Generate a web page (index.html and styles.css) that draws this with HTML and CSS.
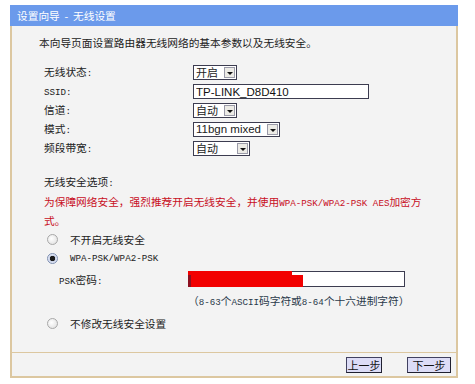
FILE: index.html
```html
<!DOCTYPE html>
<html lang="zh-CN">

<head>
    <meta charset="UTF-8">
    <meta name="viewport" content="width=device-width, initial-scale=1.0">
    <title>设置向导 - 无线设置</title>
    <link rel="stylesheet" href="styles.css">
</head>

<body>
    <div class="wizard">
        <div class="wizard-title">设置向导 &nbsp;-&nbsp; 无线设置</div>

        <div class="wizard-body">
            <p class="intro">本向导页面设置路由器无线网络的基本参数以及无线安全。</p>

            <div class="form">
                <label>无线状态<span class="en">:</span></label>
                <div class="sel sel-short"><span class="sel-text">开启</span><span class="sel-arrow"></span></div>

                <label><span class="en">SSID:</span></label>
                <input class="text" type="text" value="TP-LINK_D8D410">

                <label>信道<span class="en">:</span></label>
                <div class="sel sel-short"><span class="sel-text">自动</span><span class="sel-arrow"></span></div>

                <label>模式<span class="en">:</span></label>
                <div class="sel sel-mode"><span class="sel-text latin">11bgn mixed</span><span class="sel-arrow"></span></div>

                <label>频段带宽<span class="en">:</span></label>
                <div class="sel sel-band"><span class="sel-text">自动</span><span class="sel-arrow"></span></div>
            </div>

            <div class="security">
                <div class="sec-title">无线安全选项<span class="en">:</span></div>
                <p class="warn">为保障网络安全，强烈推荐开启无线安全，并使用<span class="en">WPA-PSK/WPA2-PSK AES</span>加密方<br>式。</p>

                <label class="opt"><span class="radio"></span>不开启无线安全</label>
                <label class="opt"><span class="radio checked"></span><span class="en">WPA-PSK/WPA2-PSK</span></label>

                <div class="psk">
                    <span class="psk-label"><span class="en">PSK</span>密码<span class="en">:</span></span>
                    <div class="psk-field">
                        <input class="text psk-input" type="password" value="">
                        <span class="redact redact-top"></span>
                        <span class="redact redact-bottom"></span>
                    </div>
                </div>
                <div class="hint">（<span class="en">8-63</span>个<span class="en">ASCII</span>码字符或<span class="en">8-64</span>个十六进制字符）</div>

                <label class="opt opt-last"><span class="radio"></span>不修改无线安全设置</label>
            </div>
        </div>

        <div class="wizard-foot">
            <button class="btn btn-prev">上一步</button>
            <button class="btn btn-next">下一步</button>
        </div>
    </div>
</body>

</html>
```

FILE: styles.css
```css
body {
    margin: 5px 0 0 10px;
    background-color: #fff;
    font-family: "Noto Sans CJK SC", sans-serif;
    font-size: 10.7px;
    color: #222;
}

.en {
    font-family: "Liberation Mono", "Noto Sans CJK SC", monospace;
    font-size: 9.2px;
}

.wizard {
    width: 444px;
    border: 2px solid #dcc7a0;
    border-top: 0;
    background-color: #f3f3f3;
}

.wizard-title {
    height: 21px;
    line-height: 21px;
    margin: 0 -2px;
    padding-left: 7px;
    background-color: #6b9aeb;
    color: #fff;
}

.wizard-body {
    height: 326px;
    padding: 0 0 0 27px;
}

.intro {
    margin: 0;
    padding-top: 8px;
    line-height: 17px;
}

.form {
    display: grid;
    grid-template-columns: 149px auto;
    grid-auto-rows: 19px;
    align-items: center;
    justify-items: start;
    margin: 12px 0 0 5px;
}

.form label {
    line-height: 17px;
}

.sel {
    display: flex;
    height: 15px;
    box-sizing: border-box;
    border: 1px solid #3c3c50;
    background-color: #fff;
}

.sel-text {
    flex: 1;
    padding-left: 2px;
    line-height: 13px;
    font-size: 11px;
}

.sel-text.latin {
    font-family: "Liberation Sans", sans-serif;
    font-size: 11.5px;
}

.sel-arrow {
    position: relative;
    width: 11px;
    margin: 1px;
    box-sizing: border-box;
    border: 1px solid #9a9aa8;
    background-color: #ecebe6;
}

.sel-arrow::after {
    content: "";
    position: absolute;
    left: 2px;
    top: 4px;
    border-left: 3px solid transparent;
    border-right: 3px solid transparent;
    border-top: 3px solid #111;
}

.sel-short {
    width: 44px;
}

.sel-mode {
    width: 87px;
}

.sel-band {
    width: 57px;
}

.text {
    box-sizing: border-box;
    height: 15px;
    margin: 0;
    padding: 0 2px;
    border: 1px solid #3c3c50;
    background-color: #fff;
    font-family: "Liberation Sans", sans-serif;
    font-size: 11.5px;
    color: #111;
}

.form .text {
    width: 176px;
}

.security {
    margin: 15px 0 0 5px;
}

.sec-title {
    line-height: 17px;
}

.warn {
    margin: 1px 0 0;
    line-height: 17px;
    color: #c80f1e;
}

.opt {
    display: flex;
    align-items: center;
    height: 19px;
    margin-left: 3px;
}

.security .warn + .opt {
    margin-top: 1px;
}

.radio {
    width: 9px;
    height: 9px;
    margin-right: 12px;
    border: 1px solid #a8a8a8;
    border-radius: 50%;
    background: radial-gradient(circle at 40% 40%, #fff, #dcdcdc);
}

.radio.checked {
    border-color: #7d8fb0;
    background: radial-gradient(circle, #1a1a1a 0 2.5px, #c9d3e6 3px, #eef 5px);
}

.psk {
    display: flex;
    align-items: center;
    height: 22px;
}

.psk-label {
    width: 129px;
    padding-left: 15px;
}

.psk-field {
    position: relative;
}

.psk-input {
    width: 217px;
    height: 16px;
}

.redact {
    position: absolute;
    background-color: #f20000;
}

.redact-top {
    left: 0;
    top: 0;
    width: 104px;
    height: 5px;
}

.redact-bottom {
    left: 3px;
    top: 4px;
    width: 112px;
    height: 12px;
    box-shadow: -3px 0 0 #8c1020;
}

.hint {
    margin: 2px 0 0 144px;
    line-height: 17px;
    color: #2a3a4a;
}

.opt-last {
    margin-top: 3px;
}

.wizard-foot {
    display: flex;
    justify-content: flex-end;
    align-items: center;
    gap: 25px;
    height: 23px;
    padding-right: 5px;
    border-top: 1px solid #dcc7a0;
}

.btn {
    height: 16px;
    padding: 0;
    border: 1px solid #404060;
    border-right-color: #202030;
    border-bottom-color: #202030;
    background-color: #dcdcf6;
    font-family: "Noto Sans CJK SC", sans-serif;
    font-size: 11px;
    line-height: 14px;
    color: #111;
    cursor: pointer;
}

.btn-prev {
    width: 36px;
}

.btn-next {
    width: 44px;
}
```
